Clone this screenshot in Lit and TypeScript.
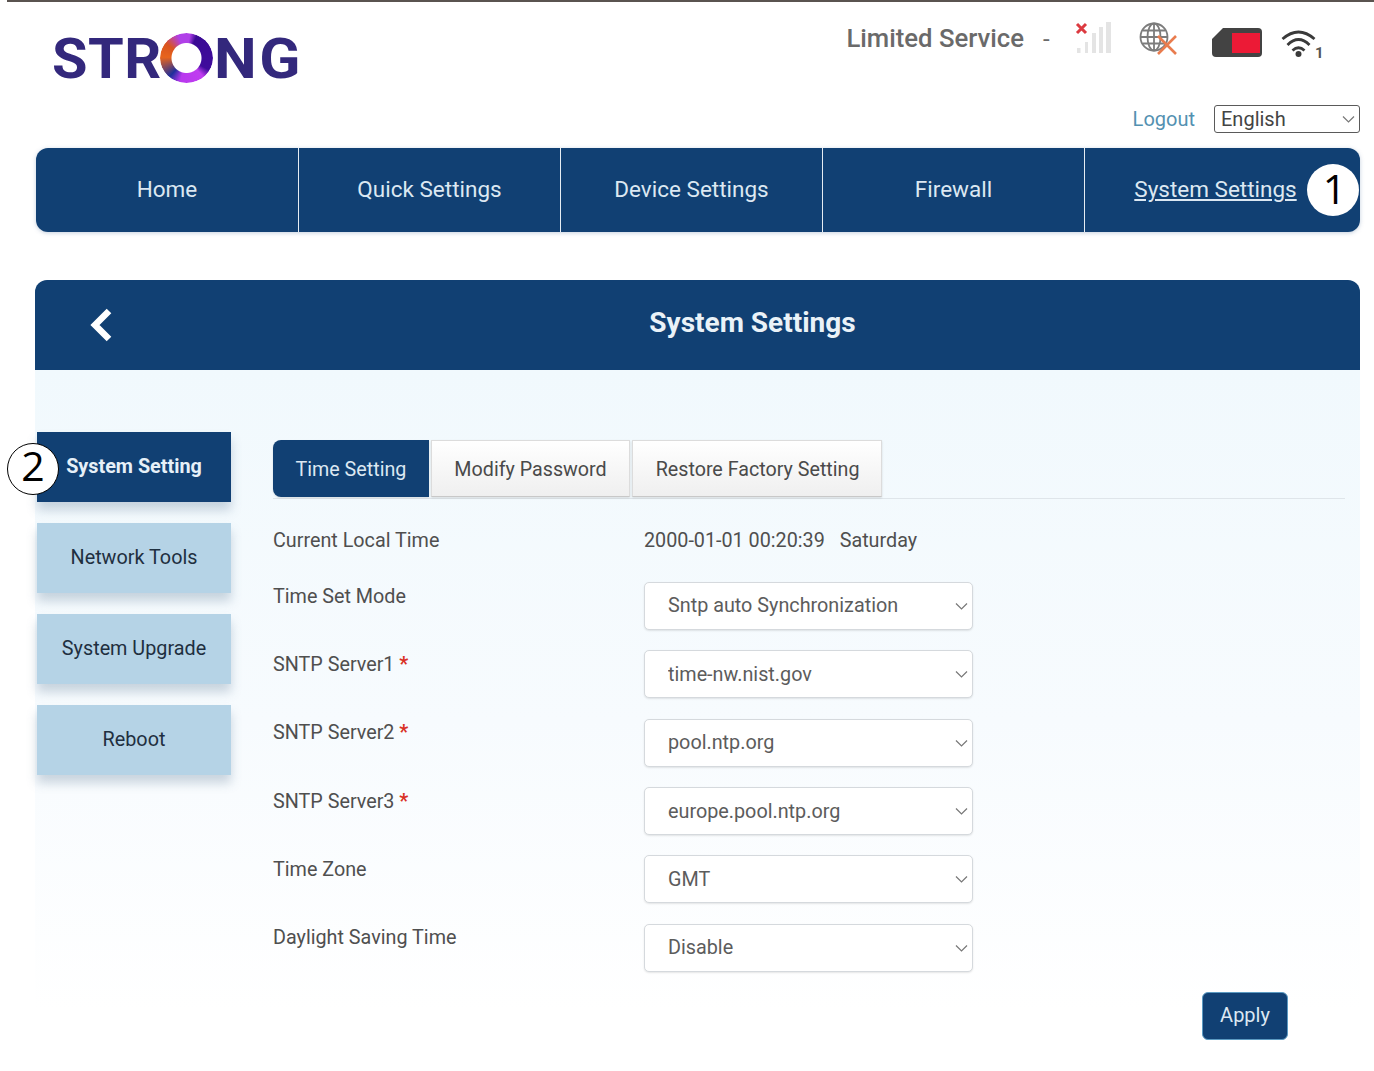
import { LitElement, html, css, svg } from 'lit';
import { customElement, state } from 'lit/decorators.js';

const chevron = svg`<path d="M1 1.5 L6.5 7 L12 1.5" fill="none" stroke="#777" stroke-width="1.2"/>`;

@customElement('app-root')
export class AppRoot extends LitElement {
    @state() private nav = ['Home', 'Quick Settings', 'Device Settings', 'Firewall', 'System Settings'];
    @state() private side = ['System Setting', 'Network Tools', 'System Upgrade', 'Reboot'];
    @state() private tabs = ['Time Setting', 'Modify Password', 'Restore Factory Setting'];
    @state() private rows = [
        { label: 'Time Set Mode', value: 'Sntp auto Synchronization', req: false },
        { label: 'SNTP Server1', value: 'time-nw.nist.gov', req: true },
        { label: 'SNTP Server2', value: 'pool.ntp.org', req: true },
        { label: 'SNTP Server3', value: 'europe.pool.ntp.org', req: true },
        { label: 'Time Zone', value: 'GMT', req: false },
        { label: 'Daylight Saving Time', value: 'Disable', req: false },
    ];

    static styles = css`
    :host {
      display: block;
      width: 1374px;
      height: 1071px;
      position: relative;
      overflow: hidden;
      background: #fff;
      font-family: Roboto, "Liberation Sans", sans-serif;
      color: #4f4f4f;
    }
    .topline { height: 2px; margin-left: 7px; background: #5a5450; }

    .header { height: 146px; display: flex; justify-content: space-between; padding: 0 14px 0 52px; }
    .logo { display: flex; align-items: center; height: 50px; margin-top: 31px; color: #33287c; font-weight: 700; font-size: 56px; line-height: 52px; }
    .logo span { height: 50px; transform-origin: left center; }
    .logo .st { width: 108px; letter-spacing: 0.5px; transform: scaleX(1.03); }
    .logo .ng { width: 86px; margin-left: 1px; letter-spacing: 2.5px; transform: scaleX(1.08); }
    .ring { width: 53px; height: 50px; border-radius: 50%; flex: none; position: relative; background: conic-gradient(#b040e8 0deg, #b040e8 8deg, #3a0a94 25deg, #3f0b9c 118deg, #c03df0 138deg, #b838ee 195deg, #1f2f9c 222deg, #e8641c 272deg, #d9541f 305deg, #b040e8 340deg, #b040e8 360deg); -webkit-mask: radial-gradient(circle, transparent 14.5px, #000 15.5px); mask: radial-gradient(circle, transparent 14.5px, #000 15.5px); }

    .head-right { display: flex; flex-direction: column; align-items: flex-end; }
    .status { display: flex; align-items: flex-start; height: 66px; padding-top: 18px; box-sizing: border-box; margin-right: 36px; }
    .status .limited { font-size: 25.7px; font-weight: 500; color: #6a6a6a; line-height: 38px; margin-top: -1px; white-space: nowrap; }
    .status .dash { font-size: 24px; color: #6a6a6a; line-height: 38px; margin-left: 19px; width: 30px; }
    .status svg { display: block; flex: none; }
    .i-signal { width: 38px; height: 36px; margin-top: 2px; }
    .i-globe { width: 42px; height: 36px; margin: 2px 1px 0 25px; }
    .i-sim { width: 52px; height: 32px; margin: 8px 0 0 32px; }
    .i-wifi { width: 44px; height: 36px; margin: 7px 0 0 17px; }
    .account { display: flex; align-items: center; gap: 19px; margin-top: 37px; }
    .logout { font-size: 20px; color: #5391b1; }
    .lang { position: relative; width: 146px; height: 28px; box-sizing: border-box; border: 1px solid #5a5a5a; border-radius: 3px; padding-left: 6px; font-size: 20px; line-height: 26px; color: #444; }
    .lang svg { position: absolute; right: 4px; top: 9px; width: 13px; height: 9px; }

    .nav { display: grid; grid-template-columns: 262px 262px 262px 262px 1fr; margin: 0 14px 0 36px; height: 84px; background: #114073; border-radius: 12px; box-shadow: 0 1px 4px rgba(90,120,160,.35); overflow: hidden; }
    .nav div { display: flex; align-items: center; justify-content: center; color: #dce8f2; font-size: 22.5px; padding-bottom: 2px; box-sizing: border-box; border-left: 1.5px solid #e6edf3; }
    .nav div:first-child { border-left: 0; }
    .nav .current { text-decoration: underline; padding-right: 14px; }

    .panel { margin: 48px 14px 0 35px; }
    .panel-head { position: relative; height: 90px; background: #114073; border-radius: 12px 12px 0 0; display: flex; align-items: center; justify-content: center; color: #eaf2f8; font-size: 28px; font-weight: 700; padding: 0 0 6px 110px; box-sizing: border-box; }
    .panel-head svg { position: absolute; left: 52px; top: 26px; width: 30px; height: 38px; }
    .panel-body { display: flex; height: 640px; background: linear-gradient(#f1f9fd 0%, #f7fbfe 55%, #ffffff 100%); box-sizing: border-box; padding-top: 62px; }

    .side { width: 238px; flex: none; padding-left: 2px; box-sizing: border-box; display: flex; flex-direction: column; gap: 21px; }
    .side div { width: 194px; height: 70px; padding-bottom: 2px; box-sizing: border-box; display: flex; align-items: center; justify-content: center; background: #b5d3e6; color: #1f2f40; font-size: 19.8px; box-shadow: 0 8px 10px rgba(80,110,140,.28); }
    .side .on { background: #114073; color: #e6f0f8; font-weight: 700; font-size: 19.8px; padding-bottom: 1px; }

    .main { flex: 1; padding-top: 8px; margin-right: 15px; }
    .tabs { display: flex; gap: 2px; height: 58px; border-bottom: 1px solid #dfe5ea; }
    .tabs div { display: flex; align-items: center; justify-content: center; height: 57px; padding: 1px 22.5px 0; font-size: 19.7px; color: #4a4a4a; background: linear-gradient(#fff, #efefef); border: 1px solid #dcdcdc; border-bottom-color: #c8c8c8; box-sizing: border-box; box-shadow: 0 1px 2px rgba(0,0,0,.12); }
    .tabs div:last-child { padding-right: 21px; }
    .tabs .on { background: #114073; color: #dce8f2; border: 0; border-radius: 8px 0 0 8px; }

    .form { display: grid; grid-template-columns: 371px 329px; grid-template-rows: 56px; grid-auto-rows: 68.4px; font-size: 19.75px; padding-top: 27.5px; }
    .form .lbl { line-height: 28px; white-space: nowrap; }
    .form .req { color: #d93025; font-weight: 700; }
    .now { line-height: 28px; height: 28px; white-space: nowrap; }
    .now span { margin-left: 10px; }
    .form .sel { position: relative; height: 48px; margin-top: -0.6px; }
    select { appearance: none; width: 100%; height: 100%; padding: 0 30px 0 23px; box-sizing: border-box; font: 19.8px Roboto, sans-serif; color: #5c5c5c; background: #fff; border: 1px solid #d5d9dd; border-radius: 5px; box-shadow: 0 1px 2px rgba(0,0,0,.1); outline: none; }
    .sel svg { position: absolute; right: 5px; top: 20px; width: 13px; height: 9px; pointer-events: none; }

    .actions { display: flex; justify-content: flex-end; margin: -1px 57px 0 0; }
    .apply { width: 86px; height: 48px; background: #114073; color: #dce8f2; border: 1px solid #5b9ac2; border-radius: 6px; font: 20px Roboto, sans-serif; padding: 0 0 1px; box-sizing: border-box; }

    .mark { position: absolute; box-sizing: border-box; border-radius: 50%; background: #fff; color: #000; display: flex; align-items: center; justify-content: center; font-family: "Open Sans", sans-serif; font-size: 41px; line-height: 1; }
    .mark.one { left: 1307px; top: 164px; width: 52px; height: 52px; padding: 0 0 3px 3px; }
    .mark.two { left: 7px; top: 443px; width: 52px; height: 52px; border: 1px solid #000; padding-bottom: 7px; }
  `;

    render() {
        return html`
      <div class="topline"></div>
      <div class="header">
        <div class="logo">
          <span class="st">STR</span>
          <div class="ring"></div>
          <span class="ng">NG</span>
        </div>
        <div class="head-right">
          <div class="status">
            <span class="limited">Limited Service</span>
            <span class="dash">-</span>
            <svg class="i-signal" viewBox="0 0 38 36">
              <path d="M4 2 L13 11 M13 2 L4 11" stroke="#dc3a40" stroke-width="3"/>
              <rect x="4" y="26" width="3.5" height="5" fill="#e4e4e4"/>
              <rect x="12" y="20" width="3" height="11" fill="#e4e4e4"/>
              <rect x="19" y="11" width="4" height="20" fill="#e4e4e4"/>
              <rect x="26" y="5" width="4" height="26" fill="#e4e4e4"/>
              <rect x="33" y="0" width="5" height="31" fill="#e4e4e4"/>
            </svg>
            <svg class="i-globe" viewBox="0 0 42 36">
              <g fill="none" stroke="#7c7c7c" stroke-width="1.8">
                <circle cx="18" cy="15" r="13.5"/>
                <ellipse cx="18" cy="15" rx="6.5" ry="13.5"/>
                <path d="M18 1.5 V28.5 M4.5 15 H31.5 M7 8.5 H29 M7 21.5 H29"/>
              </g>
              <path d="M22 14 L40 32 M40 14 L22 32" stroke="#e97c4e" stroke-width="2.6"/>
            </svg>
            <svg class="i-sim" viewBox="0 0 52 32">
              <path d="M12 0 H47 Q51 0 51 4 V25 Q51 29 47 29 H5 Q1 29 1 25 V11 Z" fill="#434343"/>
              <rect x="21" y="5" width="28" height="20" fill="#ec1a36"/>
            </svg>
            <svg class="i-wifi" viewBox="0 0 44 36">
              <g fill="none" stroke="#3a3a3a" stroke-width="2.8">
                <path d="M2.5 12 Q18.5 -2 34.5 12"/>
                <path d="M7.5 18 Q18.5 7 29.5 18"/>
                <path d="M12.5 23.5 Q18.5 18 24.5 23.5"/>
              </g>
              <circle cx="18.5" cy="27" r="3" fill="#3a3a3a"/>
              <text x="35" y="30.5" font-family="Roboto, sans-serif" font-size="15" font-weight="700" fill="#555">1</text>
            </svg>
          </div>
          <div class="account">
            <span class="logout">Logout</span>
            <div class="lang">English<svg viewBox="0 0 13 9">${chevron}</svg></div>
          </div>
        </div>
      </div>

      <div class="nav">
        ${this.nav.map((n, i) => html`<div class=${i === 4 ? 'current' : ''}>${n}</div>`)}
      </div>

      <div class="panel">
        <div class="panel-head">
          <svg viewBox="0 0 30 38"><path d="M22 5 L8 19 L22 33" fill="none" stroke="#fff" stroke-width="6.5"/></svg>
          System Settings
        </div>
        <div class="panel-body">
          <div class="side">
            ${this.side.map((s, i) => html`<div class=${i === 0 ? 'on' : ''}>${s}</div>`)}
          </div>
          <div class="main">
            <div class="tabs">
              ${this.tabs.map((t, i) => html`<div class=${i === 0 ? 'on' : ''}>${t}</div>`)}
            </div>
            <div class="form">
              <div class="lbl">Current Local Time</div>
              <div class="now">2000-01-01 00:20:39 <span>Saturday</span></div>
              ${this.rows.map(r => html`
                <div class="lbl">${r.label}${r.req ? html`<span class="req"> *</span>` : ''}</div>
                <div class="sel">
                  <select><option>${r.value}</option></select>
                  <svg viewBox="0 0 13 9">${chevron}</svg>
                </div>
              `)}
            </div>
            <div class="actions"><button class="apply">Apply</button></div>
          </div>
        </div>
      </div>

      <div class="mark one">1</div>
      <div class="mark two">2</div>
    `;
    }
}
